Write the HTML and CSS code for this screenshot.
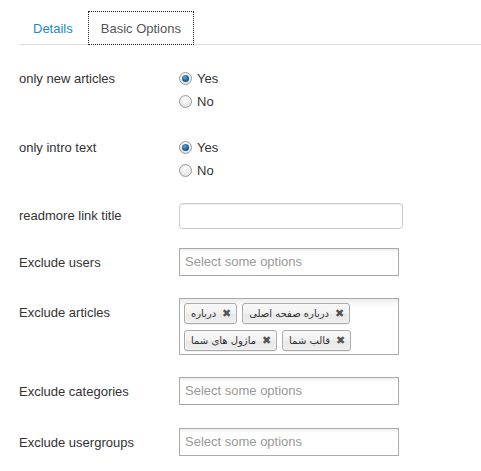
FILE: index.html
```html
<!DOCTYPE html>
<html>
<head>
<meta charset="utf-8">
<link rel="stylesheet" href="styles.css">
</head>
<body>
<div class="page">
  <ul class="tabs">
    <li class="tab"><a class="tab-link">Details</a></li>
    <li class="tab active"><a class="tab-link">Basic Options</a></li>
  </ul>

  <div class="form">
    <div class="group g1">
      <label class="label label-radio">only new articles</label>
      <div class="controls">
        <div class="radio"><span class="rb checked"></span>Yes</div>
        <div class="radio"><span class="rb"></span>No</div>
      </div>
    </div>

    <div class="group g2">
      <label class="label label-radio">only intro text</label>
      <div class="controls">
        <div class="radio"><span class="rb checked"></span>Yes</div>
        <div class="radio"><span class="rb"></span>No</div>
      </div>
    </div>

    <div class="group g3">
      <label class="label label-input">readmore link title</label>
      <div class="controls"><div class="input"></div></div>
    </div>

    <div class="group g4">
      <label class="label">Exclude users</label>
      <div class="controls"><div class="chosen"><span class="ph">Select some options</span></div></div>
    </div>

    <div class="group g5">
      <label class="label">Exclude articles</label>
      <div class="controls">
        <div class="chosen multi">
          <span class="chip"><span class="ct" dir="rtl">درباره</span><span class="x">✖</span></span>
          <span class="chip"><span class="ct" dir="rtl">درباره صفحه اصلی</span><span class="x">✖</span></span>
          <span class="chip"><span class="ct" dir="rtl">ماژول های شما</span><span class="x">✖</span></span>
          <span class="chip"><span class="ct" dir="rtl">قالب شما</span><span class="x">✖</span></span>
        </div>
      </div>
    </div>

    <div class="group g6">
      <label class="label">Exclude categories</label>
      <div class="controls"><div class="chosen"><span class="ph">Select some options</span></div></div>
    </div>

    <div class="group g7">
      <label class="label">Exclude usergroups</label>
      <div class="controls"><div class="chosen"><span class="ph">Select some options</span></div></div>
    </div>
  </div>
</div>
</body>
</html>
```

FILE: styles.css
```css
html, body {
  margin: 0;
  padding: 0;
  background: #fff;
}
body {
  font-family: "Liberation Sans", Arial, sans-serif;
  font-size: 13px;
  color: #333;
}
.page {
  padding: 11px 0 0 19px;
}
.tabs {
  list-style: none;
  margin: 0;
  padding: 0;
  display: flex;
  border-bottom: 1px solid #dddddd;
  height: 33px;
}
.tab {
  margin-right: 1px;
  height: 34px;
}
.tab-link {
  display: block;
  box-sizing: border-box;
  height: 34px;
  line-height: 33px;
  padding: 0 13px;
  color: #1a8ad3;
  border: 1px solid transparent;
}
.tab.active .tab-link {
  color: #555;
  background: #fff;
  border: 1px dotted #222;
  padding: 0 12px;
}
.form {
  padding-top: 22px;
}
.group {
  display: flex;
}
.label {
  width: 160px;
  flex: none;
  line-height: 18px;
  padding-top: 6px;
}
.label-radio {
  line-height: 23px;
  padding-top: 0;
}
.label-input {
  padding-top: 4px;
}
.g2 { margin-top: 23px; }
.g3 { margin-top: 21px; }
.g4 { margin-top: 19px; }
.g5 { margin-top: 22px; }
.g6 { margin-top: 22px; }
.g7 { margin-top: 23px; }

.radio {
  display: flex;
  align-items: center;
  height: 23px;
  line-height: 23px;
}
.rb {
  box-sizing: border-box;
  width: 13px;
  height: 13px;
  border-radius: 50%;
  border: 1px solid #9a9a9a;
  background: radial-gradient(circle at 50% 35%, #ffffff 0%, #f0f0f0 45%, #d6d6d6 100%);
  margin-right: 5px;
  position: relative;
}
.rb.checked::after {
  content: "";
  position: absolute;
  left: 2px;
  top: 2px;
  width: 7px;
  height: 7px;
  border-radius: 50%;
  background: radial-gradient(circle at 40% 35%, #5fa8dc 0%, #1a5f98 55%, #0d3a64 100%);
}
.input {
  box-sizing: border-box;
  width: 224px;
  height: 26px;
  border: 1px solid #cccccc;
  border-radius: 4px;
  box-shadow: inset 0 1px 1px rgba(0,0,0,0.075);
  background: #fff;
}
.chosen {
  box-sizing: border-box;
  width: 220px;
  height: 28px;
  border: 1px solid #aaaaaa;
  background: linear-gradient(#eeeeee 1%, #ffffff 15%);
  padding: 0 5px;
  display: flex;
  align-items: center;
}
.ph {
  color: #999;
  font-size: 13px;
  line-height: 26px;
}
.chosen.multi {
  height: 57px;
  flex-wrap: wrap;
  align-items: flex-start;
  align-content: flex-start;
  padding: 4px 0 0 4px;
  gap: 6px 5px;
}
.chip {
  box-sizing: border-box;
  height: 21px;
  display: inline-flex;
  align-items: center;
  border: 1px solid #aaaaaa;
  border-radius: 3px;
  background: linear-gradient(#f6f6f6 20%, #f0f0f0 50%, #e8e8e8 52%, #eeeeee 100%);
  box-shadow: 0 0 2px #fff inset, 0 1px 0 rgba(0,0,0,0.05);
  padding: 0 5px 0 6px;
  color: #333;
}
.x {
  font-size: 11px;
  color: #555;
  margin-left: 6px;
  line-height: 1;
}
.ct {
  font-family: "DejaVu Sans", sans-serif;
  font-size: 10px;
  line-height: 19px;
}
```
